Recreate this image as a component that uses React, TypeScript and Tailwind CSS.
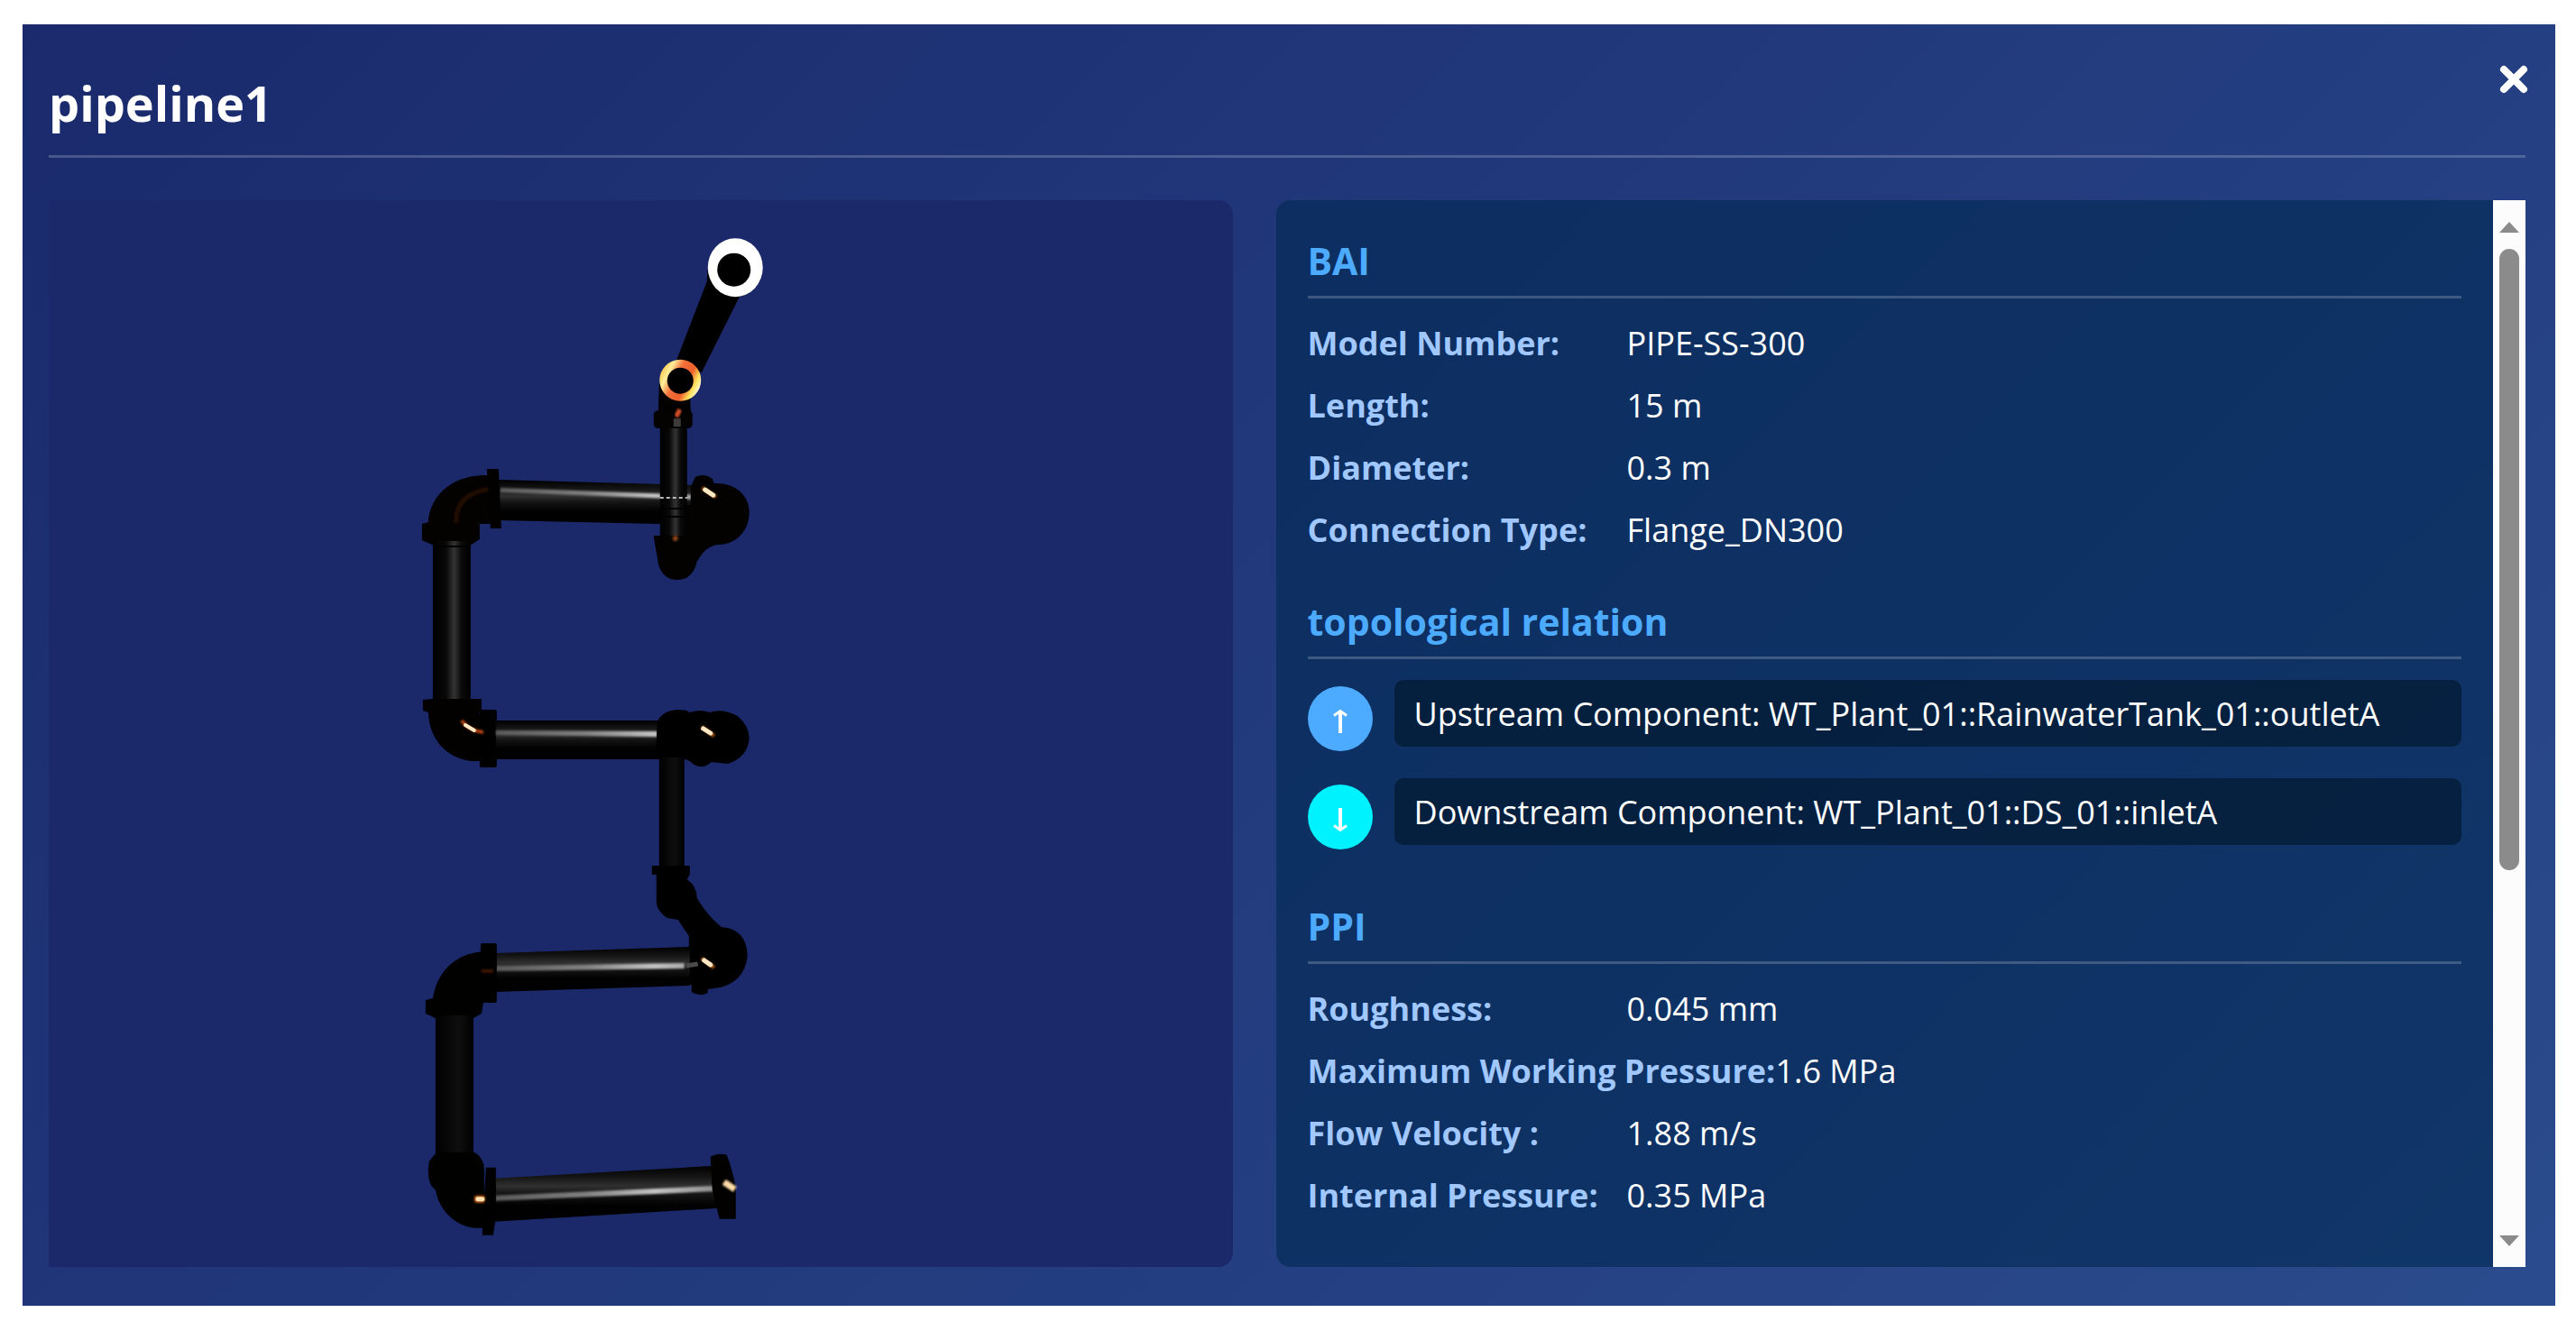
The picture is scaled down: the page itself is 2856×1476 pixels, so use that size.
import { useState } from 'react'

interface Property {
  label: string
  value: string
}

interface Relation {
  direction: 'up' | 'down'
  text: string
}

const basicInfo: Property[] = [
  { label: 'Model Number:', value: 'PIPE-SS-300' },
  { label: 'Length:', value: '15 m' },
  { label: 'Diameter:', value: '0.3 m' },
  { label: 'Connection Type:', value: 'Flange_DN300' },
]

const relations: Relation[] = [
  { direction: 'up', text: 'Upstream Component: WT_Plant_01::RainwaterTank_01::outletA' },
  { direction: 'down', text: 'Downstream Component: WT_Plant_01::DS_01::inletA' },
]

const processInfo: Property[] = [
  { label: 'Roughness:', value: '0.045 mm' },
  { label: 'Maximum Working Pressure:', value: '1.6 MPa' },
  { label: 'Flow Velocity :', value: '1.88 m/s' },
  { label: 'Internal Pressure:', value: '0.35 MPa' },
]

function SectionTitle({ children }: { children: string }) {
  return (
    <h3 className="border-b-[3px] border-white/20 pb-[11px] text-[41px] leading-[56px] font-bold text-[#4dabff]">
      {children}
    </h3>
  )
}

function PropertyList({ items }: { items: Property[] }) {
  return (
    <dl className="mt-[26px] flex flex-col gap-[21px] text-[36px] leading-[48px]">
      {items.map((item) => (
        <div key={item.label} className="flex">
          <dt className="min-w-[354px] shrink-0 font-bold text-[#a0c8ff]">{item.label}</dt>
          <dd className="text-white">{item.value}</dd>
        </div>
      ))}
    </dl>
  )
}

function RelationList({ items }: { items: Relation[] }) {
  return (
    <ul className="mt-[23px] flex flex-col gap-[30px] pb-2">
      {items.map((item) => (
        <li key={item.direction} className="flex items-start gap-6">
          <span
            className={
              item.direction === 'up'
                ? 'mt-[7px] flex size-[72px] shrink-0 items-center justify-center rounded-full bg-[#4dabff]'
                : 'mt-[7px] flex size-[72px] shrink-0 items-center justify-center rounded-full bg-[#00f2ff]'
            }
          >
            <svg
              viewBox="0 0 16 28"
              className={item.direction === 'up' ? 'mt-1.5 h-7 w-4' : 'mt-1.5 h-7 w-4 rotate-180'}
              fill="none"
              stroke="white"
              strokeWidth="4"
              aria-hidden="true"
            >
              <path d="M8 27V3" />
              <path d="M1 7.5L8 2.5L15 7.5" strokeWidth="3" />
            </svg>
          </span>
          <p className="flex-1 rounded-[10px] bg-[rgba(0,20,40,0.6)] px-[22px] pt-[14px] pb-3 text-[36px] leading-[48px] text-white">
            {item.text}
          </p>
        </li>
      ))}
    </ul>
  )
}

function PipelineModel() {
  return (
    <svg viewBox="54 222 1313 1183" className="size-full" role="img" aria-label="3D model of pipeline1">
      <defs>
        <linearGradient id="tubeH" x1="0" y1="0" x2="0" y2="1">
          <stop offset="0" stopColor="#000" />
          <stop offset="0.2" stopColor="#151515" />
          <stop offset="0.36" stopColor="#303030" />
          <stop offset="0.5" stopColor="#141414" />
          <stop offset="0.7" stopColor="#020202" />
          <stop offset="1" stopColor="#000" />
        </linearGradient>
        <linearGradient id="tubeV" x1="0" y1="0" x2="1" y2="0">
          <stop offset="0" stopColor="#000" />
          <stop offset="0.35" stopColor="#080808" />
          <stop offset="0.57" stopColor="#343434" />
          <stop offset="0.75" stopColor="#0b0b0b" />
          <stop offset="1" stopColor="#000" />
        </linearGradient>
        <linearGradient id="tubeDim" x1="0" y1="0" x2="1" y2="0">
          <stop offset="0" stopColor="#000" />
          <stop offset="0.62" stopColor="#0e0e0e" />
          <stop offset="1" stopColor="#000" />
        </linearGradient>
        <linearGradient id="shine" gradientUnits="userSpaceOnUse" x1="550" y1="0" x2="800" y2="0">
          <stop offset="0" stopColor="#5a5a5a" />
          <stop offset="0.4" stopColor="#808080" />
          <stop offset="0.7" stopColor="#c4c4c4" />
          <stop offset="1" stopColor="#8a8a8a" />
        </linearGradient>
        <linearGradient id="hotRing" x1="0" y1="0.25" x2="1" y2="0.75">
          <stop offset="0" stopColor="#ffc040" />
          <stop offset="0.2" stopColor="#ffef9a" />
          <stop offset="0.4" stopColor="#f4703a" />
          <stop offset="0.65" stopColor="#f0602e" />
          <stop offset="0.82" stopColor="#ffe25a" />
          <stop offset="1" stopColor="#fff" />
        </linearGradient>
        <filter id="soft" x="-40%" y="-40%" width="180%" height="180%">
          <feGaussianBlur stdDeviation="0.8" />
        </filter>
      </defs>

      {/* inlet branch */}
      <path d="M785 297L784 312L750 400L778 413L820 329L831 325Z" fill="#000" />
      <ellipse cx="815.5" cy="296.5" rx="30.5" ry="32.5" fill="#fff" />
      <ellipse cx="814" cy="299" rx="18.5" ry="18.5" fill="#000" />
      <path d="M731 425H765L766 458H730Z" fill="#030100" />
      <circle cx="754.5" cy="421.5" r="23" fill="url(#hotRing)" />
      <circle cx="754.5" cy="422" r="14.5" fill="#000" />

      {/* top run */}
      <path d="M553 532L780 538V582L553 577Z" fill="url(#tubeH)" />
      <path d="M555 541L777 549V554L555 546Z" fill="url(#shine)" filter="url(#soft)" />
      <path
        d="M545 527C500 524 476 552 475 579L468 581V599L479 604H523L532 598V581H545Z"
        fill="#040201"
      />
      <path d="M506 580C505 560 515 545 547 542" stroke="#220a03" strokeWidth="5" fill="none" filter="url(#soft)" />
      <path d="M540 520H553L556 586H544Z" fill="#020100" />
      <path d="M480 600H522V778H480Z" fill="url(#tubeV)" />
      <path d="M480 606H522" stroke="#000" strokeWidth="2" />
      <path
        d="M766 540L771 529Q781 524 790 531L792 536C814 535 831 548 831 568C831 589 816 604 797 604C787 605 779 611 774 622L752 610V560H766Z"
        fill="#030201"
      />
      <path d="M761 552H777" stroke="#9a9a9a" strokeWidth="5" strokeDasharray="3 2" filter="url(#soft)" />
      <path d="M779 541L794 551" stroke="#c06018" strokeWidth="4" filter="url(#soft)" />
      <path d="M782 543L791 549" stroke="#ffe8c4" strokeWidth="5" strokeLinecap="round" />

      {/* upper riser */}
      <rect x="732" y="472" width="30" height="124" fill="url(#tubeV)" />
      <rect x="725" y="455" width="43" height="20" rx="5" fill="#050301" />
      <rect x="747" y="464" width="8" height="9" fill="#3c3c3c" />
      <path d="M754 454L750 462" stroke="#d8502a" strokeWidth="5" filter="url(#soft)" />
      <path d="M732 552H762" stroke="#b8b8b8" strokeWidth="2" strokeDasharray="4 3" />
      <path d="M732 564H762M732 573H762" stroke="#000" strokeWidth="2" />
      <path d="M725 594H768L774 612C774 632 765 643 751 643C737 643 730 632 729 618L726 602Z" fill="#030201" />
      <circle cx="749" cy="597" r="3" fill="#8b4418" filter="url(#soft)" />

      {/* second run */}
      <path d="M469 776L480 775H534V787L531 792H540V844H522C494 840 476 819 475 790L469 788Z" fill="#020100" />
      <rect x="532" y="787" width="19" height="64" rx="2" fill="#010000" />
      <rect x="550" y="799" width="182" height="43" fill="url(#tubeH)" />
      <path d="M550 810L729 811V817L550 815Z" fill="url(#shine)" filter="url(#soft)" />
      <path d="M512 799Q519 810 536 812" stroke="#b84412" strokeWidth="4" fill="none" filter="url(#soft)" />
      <path d="M516 804L526 810" stroke="#ffe8c4" strokeWidth="4" strokeLinecap="round" />
      <path
        d="M729 801Q733 789 750 787Q762 787 765 790Q777 786 787 790Q801 785 818 794Q831 805 831 819Q829 840 807 847L789 845Q777 856 765 844L760 842H727Z"
        fill="#000"
      />
      <path d="M778 806L792 816" stroke="#b05818" strokeWidth="4" filter="url(#soft)" />
      <path d="M780 808L788 813" stroke="#ffe9c4" strokeWidth="5" strokeLinecap="round" />

      {/* lower riser */}
      <rect x="731" y="840" width="28" height="122" fill="url(#tubeDim)" />
      <path
        d="M723 960H765V970L762 975Q773 983 773 996Q785 1016 800 1028Q828 1030 829 1060Q826 1088 799 1095L785 1097V1101Q776 1106 767 1100V1092H764V1038L752 1020L740 1018Q728 1010 728 1000V970H723Z"
        fill="#000"
      />

      {/* third run */}
      <path d="M549 1057L765 1050V1093L549 1100Z" fill="url(#tubeH)" />
      <path d="M549 1071L759 1068V1074L549 1077Z" fill="url(#shine)" filter="url(#soft)" />
      <path d="M761 1071L774 1069" stroke="#4a4a4a" strokeWidth="5" />
      <path d="M778 1063L792 1073" stroke="#b86018" strokeWidth="4" filter="url(#soft)" />
      <path d="M781 1065L788 1070" stroke="#ffe8c4" strokeWidth="5" strokeLinecap="round" />
      <path
        d="M540 1055C503 1056 484 1080 480 1107L472 1109V1124L483 1129H525L534 1124L536 1112H542Z"
        fill="#010100"
      />
      <rect x="533" y="1046" width="18" height="66" rx="2" fill="#010000" />
      <path d="M534 1075H547V1079H534Z" fill="#3a1205" filter="url(#soft)" />
      <rect x="483" y="1126" width="42" height="158" fill="url(#tubeDim)" />

      {/* outlet run */}
      <path d="M548 1307L792 1293L798 1340L548 1355Z" fill="url(#tubeH)" />
      <path d="M549 1326L798 1315V1321L549 1332Z" fill="url(#shine)" filter="url(#soft)" />
      <path
        d="M484 1278H526Q537 1284 537 1297V1362H525C500 1358 486 1338 483 1320Q474 1314 475 1296L476 1288Z"
        fill="#010100"
      />
      <path d="M539 1295H550V1350L547 1370H535V1358Z" fill="#010000" />
      <rect x="526" y="1326" width="12" height="8" rx="3" fill="#c8641c" filter="url(#soft)" />
      <path d="M530 1330H535" stroke="#ffe0b0" strokeWidth="5" strokeLinecap="round" />
      <path d="M788 1283Q796 1278 806 1281Q812 1296 816 1317V1352H798L790 1320Z" fill="#020100" />
      <path d="M803 1311L815 1319" stroke="#ffdca8" strokeWidth="7" filter="url(#soft)" />
    </svg>
  )
}

function ScrollBar() {
  return (
    <div className="flex w-9 shrink-0 flex-col items-center bg-[#fcfcfc] pt-6 pb-[23px]">
      <button aria-label="Scroll up">
        <svg viewBox="0 0 22 12" className="block h-3 w-[22px]" fill="#8b8b8b">
          <path d="M11 0L22 12H0Z" />
        </svg>
      </button>
      <div className="flex w-full flex-1 justify-center pt-[18px]">
        <div className="h-[63%] w-[22px] rounded-full bg-[#8b8b8b]" />
      </div>
      <button aria-label="Scroll down">
        <svg viewBox="0 0 22 12" className="block h-3 w-[22px]" fill="#8b8b8b">
          <path d="M0 0H22L11 12Z" />
        </svg>
      </button>
    </div>
  )
}

export default function App() {
  const [open, setOpen] = useState(true)

  if (!open) return null

  return (
    <div className="flex min-h-screen bg-white pt-[27px] pr-[23px] pb-7 pl-[25px] font-['Open_Sans','Noto_Sans',sans-serif]">
      <div
        role="dialog"
        aria-labelledby="dialog-title"
        className="relative flex flex-1 flex-col bg-linear-135 from-[#1a2a6c] to-[#2a4b8d] pt-[55px] pr-[33px] pb-[43px] pl-[29px]"
      >
        <button
          onClick={() => setOpen(false)}
          aria-label="Close"
          className="absolute top-11 right-[29px] cursor-pointer text-white"
        >
          <svg viewBox="0 0 34 34" className="block size-[34px]" stroke="currentColor" strokeWidth="8" strokeLinecap="round">
            <path d="M6 6L28 28M28 6L6 28" />
          </svg>
        </button>

        <h2
          id="dialog-title"
          className="border-b-[3px] border-white/20 pb-[26px] text-[54px] leading-[64px] font-bold text-white"
        >
          pipeline1
        </h2>

        <div className="mt-[47px] grid flex-1 grid-cols-[18fr_19fr] gap-12">
          <div className="relative overflow-hidden rounded-r-2xl bg-[#1b296b]">
            <div className="absolute inset-0">
              <PipelineModel />
            </div>
          </div>

          <div className="flex overflow-hidden rounded-l-2xl bg-[rgba(0,40,80,0.6)]">
            <div className="flex flex-1 flex-col gap-[49px] px-[35px] pt-[39px] pb-10">
              <section>
                <SectionTitle>BAI</SectionTitle>
                <PropertyList items={basicInfo} />
              </section>
              <section>
                <SectionTitle>topological relation</SectionTitle>
                <RelationList items={relations} />
              </section>
              <section>
                <SectionTitle>PPI</SectionTitle>
                <PropertyList items={processInfo} />
              </section>
            </div>
            <ScrollBar />
          </div>
        </div>
      </div>
    </div>
  )
}
